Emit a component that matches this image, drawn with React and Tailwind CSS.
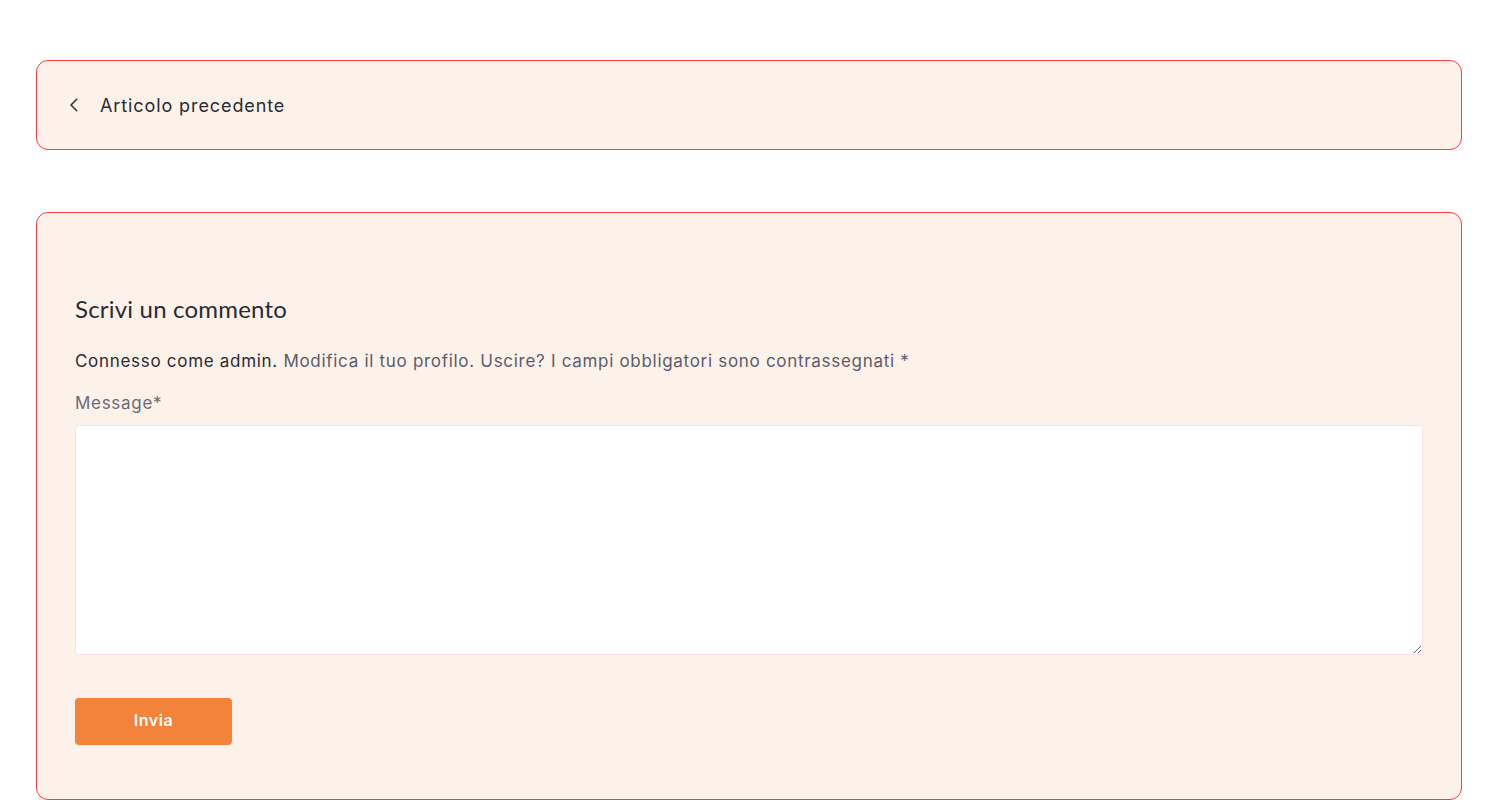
export default function App() {
    return (
        <div className="min-h-screen bg-white font-['Inter',sans-serif] text-[#2b2b33]">
            <div className="px-[36px] pt-[60px]">
                <a
                    href="#"
                    className="flex items-center gap-[18px] h-[90px] px-[31px] rounded-[12px] border border-[#ff3b3b] bg-[#fdf2ea]"
                >
                    <svg width="14" height="16" viewBox="0 0 24 28" fill="none" stroke="#2b2b33" strokeWidth="2.6" strokeLinecap="round" strokeLinejoin="round">
                        <path d="M15 4 L5 14 L15 24" />
                    </svg>
                    <span className="text-[18px] tracking-[0.9px]">Articolo precedente</span>
                </a>

                <div className="mt-[62px] rounded-[12px] border border-[#ff3b3b] bg-[#fdf2ea] px-[38px] pt-[78px] pb-[54px]">
                    <h3 className="text-[24px] tracking-[0.2px] font-['Lato',sans-serif] text-[#2b2b33]">Scrivi un commento</h3>
                    <p className="mt-[22px] text-[17px] tracking-[0.7px] text-[#5c5c6b]">
                        <span className="text-[#2b2b33]">Connesso come admin.</span>{" "}
                        Modifica il tuo profilo. Uscire? I campi obbligatori sono contrassegnati *
                    </p>
                    <label className="block mt-[16px] text-[17px] tracking-[0.7px] text-[#6b6b75]">Message*</label>
                    <textarea className="mt-[9px] block w-full h-[230px] bg-white border border-[#fbe0e4] rounded-[3px] outline-none" />
                    <button className="mt-[43px] w-[157px] h-[47px] pb-[3px] rounded-[4px] bg-[#f3823a] text-white text-[16px] tracking-[0.6px] font-semibold">
                        Invia
                    </button>
                </div>
            </div>
        </div>
    );
}
